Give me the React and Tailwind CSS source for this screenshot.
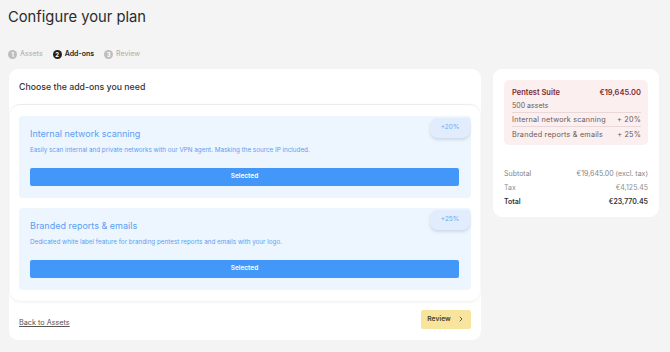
import { ChevronRight } from 'lucide-react'

const addons = [
    {
        title: 'Internal network scanning',
        description: 'Easily scan internal and private networks with our VPN agent. Masking the source IP included.',
        badge: '+20%',
    },
    {
        title: 'Branded reports & emails',
        description: 'Dedicated white label feature for branding pentest reports and emails with your logo.',
        badge: '+25%',
    },
]

function Step({ n, label, active }) {
    return (
        <div className={`flex items-center gap-[3px] ${active ? 'text-[#222]' : 'text-[#b4b4b4]'}`}>
            <span className={`w-[9px] h-[9px] rounded-full flex items-center justify-center text-[6px] font-bold text-white ${active ? 'bg-[#222]' : 'bg-[#bdbdbd]'}`}>
                {n}
            </span>
            <span className={`text-[7px] ${active ? 'font-semibold' : 'font-medium'}`}>{label}</span>
        </div>
    )
}

function AddonCard({ title, description, badge }) {
    return (
        <div className="relative rounded-[4px] bg-[#edf5fe] pl-[11px] pr-[12px] pt-[11px] pb-[12px]">
            <div className="absolute top-[2px] right-[1px] w-[40px] h-[20px] rounded-[8px] rounded-tr-[4px] bg-[#e1ecfc] shadow-[0_2px_3px_rgba(120,140,170,0.25)] flex items-center justify-center text-[6.5px] text-[#6ea8f0]">
                {badge}
            </div>
            <h3 className="text-[9px] leading-[14px] text-[#5b9ff2]">{title}</h3>
            <p className="mt-[5.5px] text-[6.3px] leading-[9px] text-[#5c9ef0]">{description}</p>
            <button className="mt-[12.5px] w-full h-[18px] rounded-[2px] bg-[#4397f8] text-white text-[6.5px] font-semibold">
                Selected
            </button>
        </div>
    )
}

export default function App() {
    return (
        <div className="w-[670px] h-[352px] overflow-hidden bg-[#f4f4f4] px-[9px] font-['Inter',sans-serif] text-[#2a2a2a]">
            <h1 className="pt-[7px] text-[14.75px] leading-[20px] -ml-[1px] text-[#2b2b2b]">Configure your plan</h1>

            <div className="mt-[22px] flex items-center gap-[10px] -ml-[1px]">
                <Step n="1" label="Assets" />
                <Step n="2" label="Add-ons" active />
                <Step n="3" label="Review" />
            </div>

            <div className="mt-[9px] flex items-start gap-[12px]">
                {/* Add-ons column */}
                <div className="w-[472px] h-[271px] rounded-[9px] bg-white flex flex-col">
                    <div className="h-[35px] pt-[4px] flex items-center px-[10px] text-[8.75px] font-medium text-[#333]">
                        Choose the add-ons you need
                    </div>
                    <div className="mx-[1px] rounded-[10px] border-t border-[#ececec] shadow-[0_1px_3px_rgba(0,0,0,0.07)] px-[9px] pt-[11px] pb-[11px] flex flex-col gap-[10px]">
                        {addons.map((a) => (
                            <AddonCard key={a.title} {...a} />
                        ))}
                    </div>
                    <div className="flex-1 flex items-center justify-between px-[10px]">
                        <a className="mt-[7px] text-[7.25px] text-[#555] underline underline-offset-1">Back to Assets</a>
                        <button className="mt-[-2px] w-[50px] h-[19px] rounded-[2px] bg-[#f8e59d] flex items-center justify-center gap-[6px] text-[6.75px] font-semibold text-[#4a4224]">
                            Review
                            <ChevronRight className="w-[8px] h-[8px]" strokeWidth={2.5} />
                        </button>
                    </div>
                </div>

                {/* Summary column */}
                <div className="w-[166px] h-[148px] rounded-[9px] bg-white p-[11px]">
                    <div className="rounded-[5px] bg-[#fcefef] pl-[8px] pr-[7px] pt-[8px] pb-[6.5px]">
                        <div className="flex justify-between text-[7.5px] leading-[10px] font-semibold text-[#7b2b2f]">
                            <span>Pentest Suite</span>
                            <span>€19,645.00</span>
                        </div>
                        <div className="mt-[3px] pb-[2px] text-[7px] leading-[9px] text-[#6b5a5a] border-b border-[#ead8d8]">500 assets</div>
                        <div className="flex justify-between py-[2px] text-[7.25px] tracking-[0.2px] leading-[9px] text-[#6b5a5a] border-b border-[#ead8d8]">
                            <span>Internal network scanning</span>
                            <span>+ 20%</span>
                        </div>
                        <div className="flex justify-between pt-[3px] text-[7.25px] tracking-[0.2px] leading-[9px] text-[#6b5a5a]">
                            <span>Branded reports &amp; emails</span>
                            <span>+ 25%</span>
                        </div>
                    </div>

                    <div className="mt-[24px] flex flex-col gap-[4px] text-[7px] leading-[10px]">
                        <div className="flex justify-between text-[#858585]">
                            <span>Subtotal</span>
                            <span>€19,645.00 (excl. tax)</span>
                        </div>
                        <div className="flex justify-between text-[#8f8f8f]">
                            <span>Tax</span>
                            <span>€4,125.45</span>
                        </div>
                        <div className="flex justify-between font-semibold text-[#333]">
                            <span>Total</span>
                            <span>€23,770.45</span>
                        </div>
                    </div>
                </div>
            </div>
        </div>
    )
}
